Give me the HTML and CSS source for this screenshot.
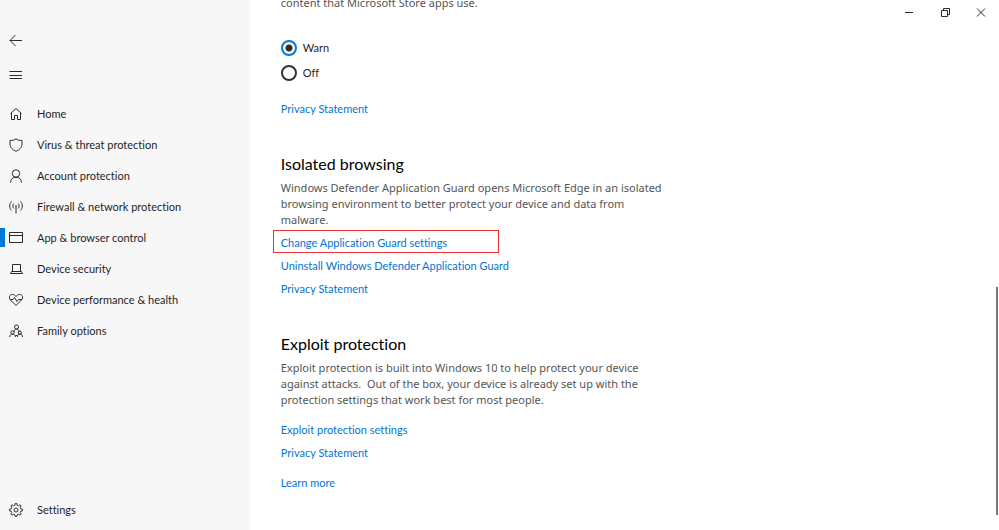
FILE: index.html
```html
<!DOCTYPE html>
<html lang="en">
<head>
<meta charset="utf-8">
<title>Windows Security</title>
<meta name="viewport" content="width=device-width, initial-scale=1">
<link rel="stylesheet" href="styles.css">
</head>
<body>
<aside class="sidebar">
  <button class="icon-button" type="button" aria-label="Back">
    <svg class="icon" viewBox="0 0 14 14"><path d="M13 6.500H1M6.500 1 1 6.500l5.500 5.500"/></svg>
  </button>
  <button class="icon-button" type="button" aria-label="Menu">
    <svg class="icon" viewBox="0 0 14 14"><path d="M.5 3.500h12.500M.5 7.500h12.500M.5 10.500h12.500"/></svg>
  </button>
  <nav class="nav">
    <a class="nav-item" href="#"><svg class="icon" viewBox="0 0 14 14"><path d="M1.500 6.500 7 1.500 12.500 6.500M2.500 6v6.500H5.500V8.500h3v4h3V6"/></svg>Home</a>
    <a class="nav-item" href="#"><svg class="icon" viewBox="0 0 14 14"><path d="M7 .8C5.500 2 3.300 2.500 1 2.500V6c0 3.500 2.500 5.700 6 7.300 3.500-1.600 6-3.800 6-7.300V2.500C10.700 2.500 8.500 2 7 .8Z"/></svg>Virus &amp; threat protection</a>
    <a class="nav-item" href="#"><svg class="icon" viewBox="0 0 14 14"><circle cx="7" cy="4.500" r="3.700"/><path d="M1.500 13.500c.2-3.300 2.300-5.300 5.500-5.300s5.300 2 5.500 5.300"/></svg>Account protection</a>
    <a class="nav-item" href="#"><svg class="icon" viewBox="0 0 14 14"><path d="M7 6v7.500M4.800 3.500c-1.200 1.400-1.200 3.600 0 5M9.200 3.500c1.200 1.400 1.200 3.600 0 5M2.500 1.500c-2.400 2.500-2.400 6.500 0 9M11.500 1.500c2.400 2.500 2.400 6.500 0 9"/><circle class="solid" cx="7" cy="6" r=".8"/></svg>Firewall &amp; network protection</a>
    <a class="nav-item current" href="#" aria-current="page"><svg class="icon" viewBox="0 0 14 14"><path d="M.5 1.500h13v10H.5ZM.5 4.500h13"/></svg>App &amp; browser control</a>
    <a class="nav-item" href="#"><svg class="icon" viewBox="0 0 14 14"><path d="M3.500 9.500v-7h8v7M2.500 9.500h10l1 2h-12Z"/></svg>Device security</a>
    <a class="nav-item" href="#"><svg class="icon" viewBox="0 0 14 14"><path d="M7 12.500 1.500 7C-.8 4.200.8 1.500 3.500 1.500 5 1.500 6.300 2.300 7 3.500c.7-1.200 2-2 3.500-2 2.700 0 4.300 2.700 2 5.500ZM1.500 6.500H4l1.500-2 2.500 4 1.500-2h3"/></svg>Device performance &amp; health</a>
    <a class="nav-item" href="#"><svg class="icon" viewBox="0 0 14 14"><circle cx="7.500" cy="3" r="2"/><path d="M5 8V7.500C5 4.300 10 4.300 10 7.500V8"/><circle cx="3.500" cy="8.500" r="1.700"/><circle cx="10.800" cy="8.700" r="1.600"/><path d="M.7 13c.2-4 5.500-4 5.700 0M8.300 13c.2-4 5-4 5.200 0M6.400 11.500h2"/></svg>Family options</a>
  </nav>
  <a class="nav-item settings" href="#"><svg class="icon" viewBox="0 0 14 14"><path d="m5.800 2.300.3-1.700h1.800l.3 1.700 1.300.5 1.400-1L12.200 3l-1 1.500.5 1.300 1.700.3v1.800l-1.700.3-.5 1.300 1 1.400-1.300 1.300-1.400-1-1.300.5-.3 1.700H6.100l-.3-1.700-1.300-.5-1.400 1-1.300-1.300 1-1.400-.5-1.300L.6 7.900V6.100l1.700-.3.5-1.300-1-1.500 1.300-1.200 1.400 1Z"/><circle cx="7" cy="7" r="2"/></svg>Settings</a>
</aside>

<main class="content">
  <section class="section">
    <p class="text">content that Microsoft Store apps use.</p>
    <div class="choices">
      <label class="choice"><input type="radio" name="store-apps" checked>Warn</label>
      <label class="choice"><input type="radio" name="store-apps">Off</label>
    </div>
    <a class="link" href="#">Privacy Statement</a>
  </section>

  <section class="section">
    <h2 class="title">Isolated browsing</h2>
    <p class="text">Windows Defender Application Guard opens Microsoft Edge in an isolated browsing environment to better protect your device and data from malware.</p>
    <div class="links">
      <a class="link highlighted" href="#">Change Application Guard settings</a>
      <a class="link" href="#">Uninstall Windows Defender Application Guard</a>
      <a class="link" href="#">Privacy Statement</a>
    </div>
  </section>

  <section class="section">
    <h2 class="title">Exploit protection</h2>
    <p class="text">Exploit protection is built into Windows 10 to help protect your device against attacks.&nbsp; Out of the box, your device is already set up with the protection settings that work best for most people.</p>
    <div class="links spaced">
      <a class="link" href="#">Exploit protection settings</a>
      <a class="link" href="#">Privacy Statement</a>
    </div>
    <a class="link more" href="#">Learn more</a>
  </section>
</main>

<div class="window-controls">
  <button type="button" aria-label="Minimize"><svg class="icon" viewBox="0 0 14 14"><path d="M3 7.500h8"/></svg></button>
  <button type="button" aria-label="Restore"><svg class="icon" viewBox="0 0 14 14"><path d="M3.500 5.500h6v6h-6ZM5.500 5.500v-2h6v6h-2"/></svg></button>
  <button type="button" aria-label="Close"><svg class="icon" viewBox="0 0 14 14"><path d="m3 3.500 8 8M11 3.500l-8 8"/></svg></button>
</div>
<div class="scroll-thumb"></div>
</body>
</html>
```

FILE: styles.css
```css
* {
  box-sizing: border-box;
}

body {
  display: flex;
  height: 100vh;
  margin: 0;
  overflow: hidden;
  background: #fff;
  color: #1f1f1f;
  font: 11px/16px "Segoe UI", Lato, sans-serif;
  font-variant-ligatures: none;
}

button {
  padding: 0;
  border: 0;
  background: none;
  color: inherit;
}

a {
  text-decoration: none;
}

.icon {
  display: block;
  flex: none;
  width: 14px;
  height: 14px;
  fill: none;
  stroke: #2b2b2b;
  stroke-width: 1;
}

.icon .solid {
  fill: #2b2b2b;
  stroke: none;
}

.sidebar {
  display: flex;
  flex: 0 0 25%;
  flex-direction: column;
  padding: 24px 0 5px;
  background: #f7f7f7;
}

.icon-button {
  display: flex;
  align-items: center;
  width: 32px;
  height: 34px;
  padding-left: 9px;
}

.nav {
  display: flex;
  flex-direction: column;
  margin-top: 6px;
}

.nav-item {
  display: flex;
  align-items: center;
  gap: 14px;
  height: 31px;
  padding-left: 9px;
  color: #1f1f1f;
}

.nav-item.current {
  background: linear-gradient(#0078d7, #0078d7) left center / 5px 19px no-repeat;
}

.settings {
  margin-top: auto;
}

.content {
  display: flex;
  flex: 1;
  flex-direction: column;
  justify-content: flex-end;
  gap: 32px;
  padding: 0 32px 36px 31px;
}

.section {
  max-width: 388px;
}

.title {
  margin: 0 0 4px;
  color: #000;
  font-size: 16px;
  font-weight: 400;
  line-height: 24px;
}

.text {
  margin: 0;
  color: #555;
  font-family: "Segoe UI", "Noto Sans", sans-serif;
}

.choices {
  margin: 24px 0 12px;
}

.choice {
  display: flex;
  align-items: center;
  gap: 6px;
  width: fit-content;
  height: 25px;
}

.choice input {
  width: 16px;
  height: 16px;
  margin: 0;
  border: 2px solid #333;
  border-radius: 50%;
  appearance: none;
}

.choice input:checked {
  border-color: #0078d7;
  background: radial-gradient(circle, #2b2b2b 3px, transparent 4px);
}

.links {
  margin-top: 3px;
}

.links.spaced {
  margin-top: 10px;
}

.link {
  position: relative;
  display: block;
  width: fit-content;
  color: #0074d4;
  line-height: 23px;
}

.link.more {
  margin-top: 7px;
}

.highlighted::after {
  position: absolute;
  inset: -1px -52px 1px -8px;
  border: 1px solid #f03030;
  content: "";
}

.window-controls {
  position: absolute;
  top: 0;
  right: 0;
  display: flex;
}

.window-controls button {
  display: grid;
  place-items: center;
  width: 36px;
  height: 24px;
}

.scroll-thumb {
  position: absolute;
  right: 1px;
  bottom: 15px;
  width: 2px;
  height: 43%;
  background: #777;
}
```
